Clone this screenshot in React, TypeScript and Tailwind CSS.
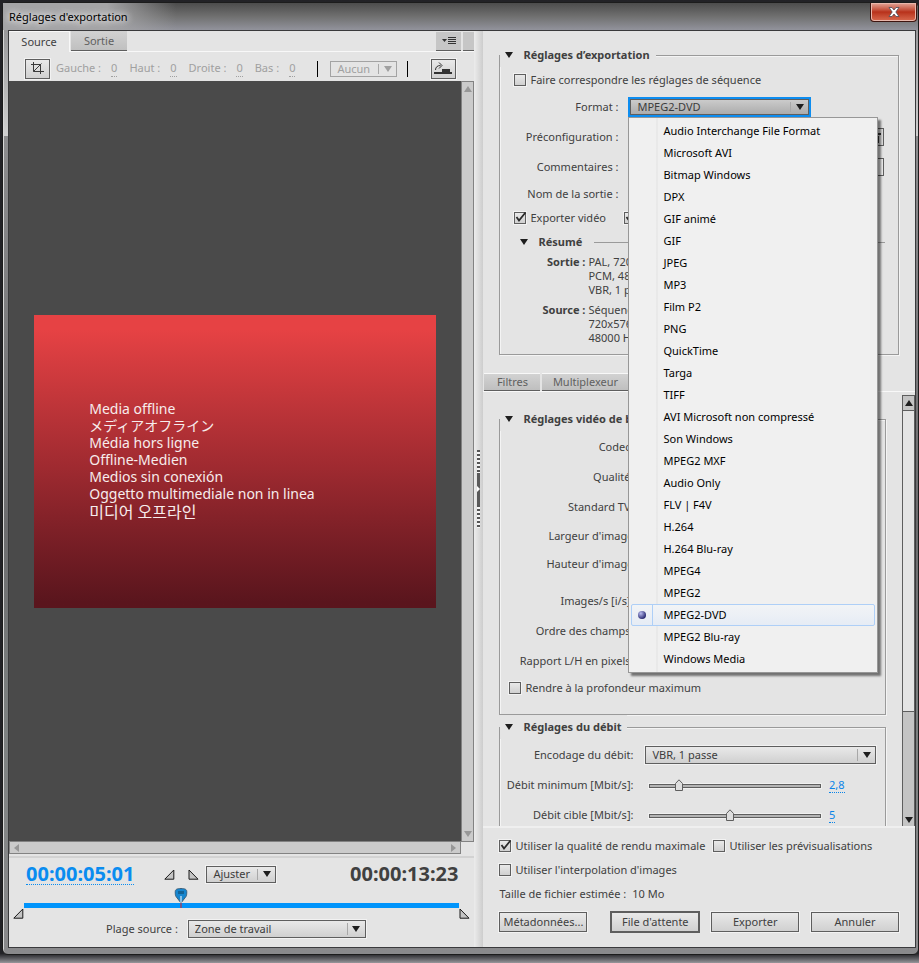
import { useState } from "react";
import type { ReactNode } from "react";
import clsx from "clsx";

const FORMATS = [
  "Audio Interchange File Format",
  "Microsoft AVI",
  "Bitmap Windows",
  "DPX",
  "GIF animé",
  "GIF",
  "JPEG",
  "MP3",
  "Film P2",
  "PNG",
  "QuickTime",
  "Targa",
  "TIFF",
  "AVI Microsoft non compressé",
  "Son Windows",
  "MPEG2 MXF",
  "Audio Only",
  "FLV | F4V",
  "H.264",
  "H.264 Blu-ray",
  "MPEG4",
  "MPEG2",
  "MPEG2-DVD",
  "MPEG2 Blu-ray",
  "Windows Media",
];

const OFFLINE_LINES = [
  { lang: "en", text: "Media offline" },
  { lang: "ja", text: "メディアオフライン" },
  { lang: "fr", text: "Média hors ligne" },
  { lang: "de", text: "Offline-Medien" },
  { lang: "es", text: "Medios sin conexión" },
  { lang: "it", text: "Oggetto multimediale non in linea" },
  { lang: "ko", text: "미디어 오프라인" },
];

const CROP_FIELDS = ["Gauche :", "Haut :", "Droite :", "Bas :"];

function Arrow({ dir = "down", className }: { dir?: "down" | "up" | "left" | "right"; className?: string }) {
  const d = {
    down: "M0 0h8L4 6z",
    up: "M0 6h8L4 0z",
    left: "M5 0v8L0 4z",
    right: "M0 0v8l5-4z",
  }[dir];
  const flat = dir === "down" || dir === "up";
  return (
    <svg
      width={flat ? 8 : 5}
      height={flat ? 6 : 8}
      viewBox={flat ? "0 0 8 6" : "0 0 5 8"}
      className={clsx("shrink-0", className)}
      aria-hidden="true"
    >
      <path d={d} fill="currentColor" />
    </svg>
  );
}

type SelectProps = {
  id?: string;
  label?: string;
  options: string[];
  value?: string;
  onChange?: (v: string) => void;
  disabled?: boolean;
  className?: string;
};

function Select({ id, label, options, value, onChange, disabled, className }: SelectProps) {
  return (
    <div
      className={clsx(
        "relative flex items-center border",
        disabled ? "border-[#a3a3a3] text-[#a0a0a0]" : "border-[#5e5e5e] text-[#3c3c3c]",
        className ?? "",
      )}
    >
      <select
        id={id}
        aria-label={label}
        disabled={disabled}
        value={value ?? options[0]}
        onChange={(e) => onChange?.(e.target.value)}
        className="h-full w-full appearance-none bg-transparent pr-5 pl-1.5 leading-[14px] outline-none"
      >
        {options.map((o) => (
          <option key={o}>{o}</option>
        ))}
      </select>
      <span className="pointer-events-none absolute inset-y-0.5 right-0 flex w-[18px] items-center justify-center border-l border-[#a8a8a8]">
        <Arrow className={disabled ? "text-[#a0a0a0]" : "text-[#1e1e1e]"} />
      </span>
    </div>
  );
}

// raised grey face shared by drop-downs and buttons
const FACE = "bg-linear-to-b from-[#e9e9e9] to-[#d0d0d0] shadow-[0_0_0_1px_#f2f2f2]";

function CheckBox({ id, label, checked = false }: { id?: string; label?: string; checked?: boolean }) {
  return (
    <span className="relative size-3 shrink-0">
      <input
        id={id}
        type="checkbox"
        aria-label={label}
        defaultChecked={checked}
        className={clsx("peer block size-3 appearance-none border border-[#5e5e5e]", FACE)}
      />
      <svg
        viewBox="0 0 14 12"
        className="pointer-events-none absolute top-0 left-0 hidden h-3 w-3.5 overflow-visible peer-checked:block"
        aria-hidden="true"
      >
        <path d="M2.500 5 5 8.500 11.500.5" fill="none" stroke="#2a2a2a" strokeWidth="1.800" />
      </svg>
    </span>
  );
}

function Check({ label, checked }: { label: string; checked?: boolean }) {
  return (
    <label className="flex items-center gap-1 whitespace-nowrap">
      <CheckBox checked={checked} />
      {label}
    </label>
  );
}

function Group({ title, className, children }: { title: string; className?: string; children: ReactNode }) {
  return (
    <fieldset
      className={clsx(
        "min-w-0 border border-[#9a9a9a] pt-px shadow-[1px_1px_0_#f4f4f4,inset_1px_1px_0_#f4f4f4]",
        className,
      )}
    >
      <legend className="flex h-6 items-center bg-[#e4e4e4] pr-1.5 pl-[5px] font-bold">
        <Arrow className="mr-2.5 text-[#1e1e1e]" />
        {title}
      </legend>
      {children}
    </fieldset>
  );
}

type RowProps = { label: string; htmlFor?: string; children?: ReactNode; className?: string };

function Row({ label, htmlFor, children, className }: RowProps) {
  return (
    <div className={clsx("flex items-center", className)}>
      <label htmlFor={htmlFor} className="w-[118px] shrink-0 text-right whitespace-nowrap">
        {label}
      </label>
      <div className="ml-2.5 flex min-w-0 flex-1 items-center gap-1 pr-3.5">{children}</div>
    </div>
  );
}

function VideoRow({ label, htmlFor, children, className = "h-[30px]" }: RowProps) {
  return (
    <div className={clsx("flex items-center", className)}>
      <label htmlFor={htmlFor} className="w-[133px] shrink-0 text-right whitespace-nowrap">
        {label}
      </label>
      <div className="ml-3 flex min-w-0 flex-1 items-center pr-[9px]">{children}</div>
    </div>
  );
}

function Slider({ id, initial, max }: { id: string; initial: number; max: number }) {
  const [value, setValue] = useState(initial);
  return (
    <>
      <div className="relative mx-1 h-4 flex-1">
        <div className="mt-[7px] h-1 border border-[#5e5e5e] bg-[#b4b4b4] shadow-[0_0_0_1px_#f0f0f0]" />
        <svg
          width="10"
          height="13"
          viewBox="0 0 10 13"
          className="absolute top-0.5 -translate-x-1/2"
          style={{ left: `${(value / max) * 100}%` }}
          aria-hidden="true"
        >
          <path d="M1.500 11.500v-7L5 .8l3.500 3.700v7z" fill="#dedede" stroke="#5e5e5e" />
        </svg>
        <input
          id={id}
          type="range"
          min={0}
          max={max}
          step={0.1}
          value={value}
          onChange={(e) => setValue(Number(e.target.value))}
          className="absolute inset-0 w-full opacity-0"
        />
      </div>
      <span className="ml-1 w-[47px] text-[#0a84e8]">
        <span className="border-b border-dotted border-[#0a84e8]">{String(value).replace(".", ",")}</span>
      </span>
    </>
  );
}

function PushButton({ children, primary }: { children: ReactNode; primary?: boolean }) {
  return (
    <button
      type="button"
      className={clsx(
        "h-5 w-[88px] border border-[#5e5e5e] text-center leading-4",
        FACE,
        primary && "outline outline-[#5e5e5e]",
      )}
    >
      {children}
    </button>
  );
}

function TitleBar() {
  return (
    <header className="flex h-[27px] shrink-0 items-start justify-between rounded-t-md bg-linear-to-b from-[#4c4c4c] via-[#707070] to-[#92939c]">
      <h1 className="flex h-full items-center bg-linear-to-r from-[#a4a4a6] from-60% to-transparent pr-12 pl-1.5 text-black [text-shadow:0_0_6px_#fff,0_0_10px_#fff]">
        Réglages d'exportation
      </h1>
      <button
        type="button"
        aria-label="Fermer"
        className="mr-px flex h-[19px] w-[47px] items-center justify-center rounded-b border border-t-0 border-[#3d1510] bg-linear-to-b from-[#e3a598] from-0% via-[#b8311a] via-50% to-[#d8694e] shadow-[inset_0_0_0_1px_#e9b7ab]"
      >
        <svg width="12" height="10" viewBox="0 0 12 10" aria-hidden="true">
          <path
            d="M1 .5h3l2 2.500 2-2.500h3L7.800 5l3.200 4.500H8L6 7 4 9.500H1L4.200 5z"
            fill="#fff"
            stroke="#4a4a55"
            strokeWidth=".8"
          />
        </svg>
      </button>
    </header>
  );
}

function SourceTabs() {
  return (
    <div className="flex h-[21px] shrink-0 items-stretch border-b border-[#f8f8f8]">
      <div role="tablist" className="flex">
        <button
          type="button"
          role="tab"
          aria-selected="true"
          className="-mb-px w-[61px] border-t border-r border-[#f8f8f8] bg-[#e4e4e4] pb-px text-center"
        >
          Source
        </button>
        <button
          type="button"
          role="tab"
          aria-selected="false"
          className="ml-px h-5 w-14 self-start border-b border-[#5e5e5e] bg-linear-to-b from-[#d2d2d2] to-[#c0c0c0] text-[#606060]"
        >
          Sortie
        </button>
      </div>
      <div className="ml-auto flex h-5 gap-0.5 pt-px">
        <button
          type="button"
          aria-label="Menu du panneau"
          className="flex w-[25px] items-center justify-center border-b border-[#5e5e5e] bg-[#c6c6c6]"
        >
          <svg width="14" height="9" viewBox="0 0 14 9" aria-hidden="true">
            <path d="M0 2h5L2.500 5z" fill="#333" />
            <path d="M6 .5h8M6 2.500h8M6 4.500h8M6 6.500h8" stroke="#333" />
          </svg>
        </button>
        <span className="w-[11px] border-b border-[#5e5e5e] bg-[#c6c6c6]" />
      </div>
    </div>
  );
}

function CropToolbar() {
  return (
    <div className="flex h-[29px] shrink-0 items-center pt-1 pr-[18px] pl-4 text-[#a0a0a0]">
      <button
        type="button"
        aria-label="Recadrer"
        className={clsx("mr-1.5 flex h-5 w-[25px] shrink-0 items-center justify-center border border-[#5e5e5e]", FACE)}
      >
        <svg width="13" height="13" viewBox="0 0 13 13" fill="none" stroke="#3a3a3a" aria-hidden="true">
          <path d="M2.500 0v9.500H13M0 2.500h9.500V12M2.500 9.500 10.500 1.500" />
        </svg>
      </button>
      <div className="flex gap-3">
        {CROP_FIELDS.map((f) => (
          <span key={f} className="flex gap-2.5 whitespace-nowrap">
            {f}
            <span className="border-b border-dotted border-[#a0a0a0]">0</span>
          </span>
        ))}
      </div>
      <span className="ml-[22px] h-4 w-px bg-black" />
      <Select label="Proportions" options={["Aucun"]} disabled className="ml-3 h-4 w-[67px] shrink-0" />
      <span className="ml-2.5 h-4 w-px bg-black" />
      <button
        type="button"
        aria-label="Définir la sortie"
        className={clsx("ml-auto flex h-5 w-[25px] shrink-0 items-center justify-center border border-[#5e5e5e]", FACE)}
      >
        <svg width="19" height="13" viewBox="0 0 19 13" aria-hidden="true">
          <path d="M0 10h8V7h8v3h2v2H0z" fill="#333" />
          <path d="M1.500 8c0-3 2-4.500 5-4.500" fill="none" stroke="#333" />
          <path d="M5 .5 8 3.500l-3 3" fill="none" stroke="#333" />
        </svg>
      </button>
    </div>
  );
}

function Viewer() {
  return (
    <div className="flex min-h-0 flex-1">
      <div className="flex min-w-0 flex-1 flex-col">
        <div className="flex min-h-0 flex-1 items-center justify-center bg-[#4a4a4a]">
          <div className="h-[293px] w-[402px] bg-linear-to-b from-[#e64244] from-5% via-[#a22b31] via-50% to-[#5a151d] to-98% pt-[85px] pl-[55px] text-[14px] leading-[17px] text-[#f7ecec]">
            {OFFLINE_LINES.map(({ lang, text }) => (
              <p key={lang} lang={lang} className={lang === "ko" ? "mt-0.5 text-[16px]" : undefined}>
                {text}
              </p>
            ))}
          </div>
        </div>
        <div className="flex h-[13px] shrink-0 items-center justify-between border border-[#828282] bg-[#cbcbcb] px-1 text-[#979797]">
          <Arrow dir="left" />
          <Arrow dir="right" />
        </div>
      </div>
      <div className="mb-3 flex w-[13px] shrink-0 flex-col items-center justify-between border border-[#828282] bg-[#cbcbcb] py-1 text-[#979797]">
        <Arrow dir="up" />
        <Arrow dir="down" />
      </div>
    </div>
  );
}

function Mark({ side }: { side: "in" | "out" }) {
  return (
    <svg width="11" height="11" viewBox="0 0 11 11" className="shrink-0" aria-hidden="true">
      <path d={side === "in" ? "M.8 10.200h9V1z" : "M1 1v9.200h9z"} fill="#c4c4c4" stroke="#1a1a1a" />
    </svg>
  );
}

function Timeline() {
  return (
    <div className="mt-0.5 shrink-0 border-t-2 border-[#d2d2d2] pt-1">
      <div className="flex h-6 items-center pr-4 pl-[17px]">
        <span className="border-b border-dotted border-[#0a8cf0] text-[20px] leading-[20px] font-bold text-[#0a8cf0]">
          00:00:05:01
        </span>
        <span className="ml-[30px] flex gap-[13px]">
          <Mark side="in" />
          <Mark side="out" />
        </span>
        <Select label="Zoom" options={["Ajuster"]} className={clsx("ml-[7px] h-[17px] w-[70px]", FACE)} />
        <span className="ml-auto text-[20px] leading-[20px] font-bold">00:00:13:23</span>
      </div>
      <div className="mx-[15px] mt-[17px] h-[5px] bg-[#0094fb]">
        <div className="relative">
          <svg
            width="13"
            height="20"
            viewBox="0 0 13 20"
            className="absolute bottom-0 left-[36%] -mb-[5px] -translate-x-1/2"
            aria-hidden="true"
          >
            <path
              d="M6.500 15 1.500 8.500C.5 7 .5 5 .5 4 .5 1.500 2.500.5 6.500.5s6 1 6 3.500c0 1 0 3-1 4.500z"
              fill="#1686cf"
              stroke="#41617a"
            />
            <path d="M4.500 3v3M6.500 3v3M8.500 3v3" stroke="#10405f" />
            <path d="M6.500 8v7" stroke="#fff" />
            <path d="M6.500 15v5" stroke="#e02020" />
          </svg>
        </div>
      </div>
      <div className="flex justify-between px-1">
        <Mark side="in" />
        <Mark side="out" />
      </div>
      <div className="flex h-5 items-center pl-[97px]">
        <label htmlFor="plage">Plage source :</label>
        <Select id="plage" options={["Zone de travail"]} className={clsx("ml-2.5 h-[18px] w-[178px]", FACE)} />
      </div>
      <div className="h-2" />
    </div>
  );
}

function Divider() {
  const grip = "h-[23px] w-[3px] bg-[repeating-linear-gradient(to_bottom,#555_0_2px,#f6f6f6_2px_4px)]";
  return (
    <div className="flex flex-col items-center justify-center bg-linear-to-r from-[#ececec] to-[#cdcdcd]">
      <span className={grip} />
      <span className="flex h-8 w-[3px] items-center bg-[#5a5a5a]">
        <svg width="3" height="6" viewBox="0 0 3 6" aria-hidden="true">
          <path d="M0 0v6l3-3z" fill="#fff" />
        </svg>
      </span>
      <span className={grip} />
    </div>
  );
}

function FormatMenu({ value, onPick }: { value: string; onPick: (v: string) => void }) {
  return (
    <ul
      role="menu"
      className="w-[250px] border border-[#979797] bg-[#f0f0f0] bg-linear-to-r from-[#f0f0f0] from-[27px] via-[#e2e2e2] via-[28px] to-[#f0f0f0] to-[29px] p-0.5 text-black shadow-[3px_3px_2px_#00000080]"
    >
      {FORMATS.map((f) => {
        const active = f === value;
        return (
          <li key={f} role="none">
            <button
              type="button"
              role="menuitemradio"
              aria-checked={active}
              onClick={() => onPick(f)}
              className={clsx(
                "flex h-[22px] w-full items-center rounded-xs border text-left",
                active ? "border-[#aecff7] bg-linear-to-b from-[#f2f4f6] to-[#e6ecf5]" : "border-transparent",
              )}
            >
              <span
                className={clsx(
                  "mr-2.5 flex h-full w-[21px] items-center justify-center border-r",
                  active ? "border-[#aecff7]" : "border-transparent",
                )}
              >
                {active && (
                  <span className="size-2 rounded-full bg-radial-[at_35%_30%] from-[#b9bdf0] to-[#1c1c66] to-80%" />
                )}
              </span>
              {f}
            </button>
          </li>
        );
      })}
    </ul>
  );
}

function ExportSettings() {
  const [format, setFormat] = useState("MPEG2-DVD");
  return (
    <Group title="Réglages d’exportation" className="relative z-10 mx-4 mt-3 pb-[9px]">
      <div className="flex h-6 items-center pl-3.5">
        <Check label="Faire correspondre les réglages de séquence" />
      </div>
      <Row label="Format :" htmlFor="format" className="h-[30px]">
        <div className="relative w-[183px] border-2 border-[#0d8df0]">
          <Select
            id="format"
            options={FORMATS}
            value={format}
            onChange={setFormat}
            className="h-4 bg-linear-to-b from-[#cbcbcb] to-[#acacac]"
          />
          <div className="absolute top-[18px] -left-0.5 z-20">
            <FormatMenu value={format} onPick={setFormat} />
          </div>
        </div>
      </Row>
      <Row label="Préconfiguration :" className="h-[30px]">
        <button
          type="button"
          aria-label="Supprimer"
          className="ml-auto flex h-[18px] w-[25px] items-center justify-end border border-[#5e5e5e] bg-[#dcdcdc] pr-0.5"
        >
          <svg width="9" height="11" viewBox="0 0 9 11" aria-hidden="true">
            <path d="M0 1h9v2H0zM1 4h6v7H1z" fill="#333" />
          </svg>
        </button>
      </Row>
      <Row label="Commentaires :" htmlFor="comments" className="h-[30px]">
        <input id="comments" type="text" className="h-[18px] w-full border border-[#5e5e5e] bg-[#ececec]" />
      </Row>
      <Row label="Nom de la sortie :" className="h-6" />
      <div className="flex h-6 items-center gap-[18px] pl-3.5">
        <Check label="Exporter vidéo" checked />
        <CheckBox label="Exporter l'audio" checked />
      </div>
      <fieldset className="mr-[13px] ml-4 border-t border-[#9a9a9a]">
        <legend className="flex h-6 items-center pr-3 pl-1 font-bold">
          <Arrow className="mr-2.5 text-[#1e1e1e]" />
          Résumé
        </legend>
        <dl className="grid grid-cols-[69px_1fr] gap-x-[3px] gap-y-1.5 pt-px leading-[14px]">
          <dt className="text-right font-bold">Sortie :</dt>
          <dd>
            PAL, 720
            <br />
            PCM, 48
            <br />
            VBR, 1 p
          </dd>
          <dt className="text-right font-bold">Source :</dt>
          <dd>
            Séquenc
            <br />
            720x576
            <br />
            48000 H
          </dd>
        </dl>
      </fieldset>
    </Group>
  );
}

function SettingsTabs() {
  const tab =
    "h-[18px] border-t border-b border-t-[#f8f8f8] border-b-[#5e5e5e] bg-linear-to-b from-[#d2d2d2] to-[#bfbfbf] text-[#606060]";
  return (
    <div role="tablist" className="mt-[18px] flex shrink-0 gap-0.5 border-b border-[#f8f8f8] pl-px">
      <button type="button" role="tab" className={clsx(tab, "w-14")}>
        Filtres
      </button>
      <button type="button" role="tab" className={clsx(tab, "w-[86px]")}>
        Multiplexeur
      </button>
    </div>
  );
}

function VideoSettings() {
  return (
    <div className="flex min-h-0 flex-1 pt-[3px]">
      <div className="min-w-0 flex-1 overflow-hidden pr-4 pl-4">
        <Group title="Réglages vidéo de b" className="mt-3 pb-3.5">
          <VideoRow label="Codec:" />
          <VideoRow label="Qualité:" />
          <VideoRow label="Standard TV:" />
          <VideoRow label="Largeur d'image" className="h-7" />
          <VideoRow label="Hauteur d'image" className="mb-2 h-7" />
          <VideoRow label="Images/s [i/s]:" />
          <VideoRow label="Ordre des champs:" />
          <VideoRow label="Rapport L/H en pixels:" />
          <div className="flex h-6 items-center pl-[9px]">
            <Check label="Rendre à la profondeur maximum" />
          </div>
        </Group>
        <Group title="Réglages du débit" className="pb-10">
          <VideoRow label="Encodage du débit:" htmlFor="encodage">
            <Select id="encodage" options={["VBR, 1 passe"]} className={clsx("h-[18px] w-full", FACE)} />
          </VideoRow>
          <VideoRow label="Débit minimum [Mbit/s]:" htmlFor="debit-min">
            <Slider id="debit-min" initial={2.8} max={16} />
          </VideoRow>
          <VideoRow label="Débit cible [Mbit/s]:" htmlFor="debit-cible">
            <Slider id="debit-cible" initial={5} max={10.7} />
          </VideoRow>
        </Group>
      </div>
      <div className="flex w-[13px] shrink-0 flex-col border-x border-[#5e5e5e] bg-[#c4c4c4] text-[#1e1e1e]">
        <span className="flex h-[15px] shrink-0 items-center justify-center border-t border-[#5e5e5e]">
          <Arrow dir="up" />
        </span>
        <span className="h-[70%] border-y border-[#5e5e5e] bg-[#e4e4e4]" />
        <span className="mt-auto flex h-3 items-center justify-center">
          <Arrow />
        </span>
      </div>
    </div>
  );
}

function Footer() {
  return (
    <footer className="shrink-0 border-t-2 border-[#efefef] px-4 pt-1.5 pb-[15px]">
      <div className="flex h-6 items-center gap-2">
        <Check label="Utiliser la qualité de rendu maximale" checked />
        <Check label="Utiliser les prévisualisations" />
      </div>
      <div className="flex h-6 items-center">
        <Check label="Utiliser l'interpolation d'images" />
      </div>
      <p className="flex h-6 items-center gap-1.5">
        Taille de fichier estimée : <span>10 Mo</span>
      </p>
      <div className="mt-1.5 flex gap-3">
        <PushButton>Métadonnées...</PushButton>
        <span className="ml-auto" />
        <PushButton primary>File d'attente</PushButton>
        <PushButton>Exporter</PushButton>
        <PushButton>Annuler</PushButton>
      </div>
    </footer>
  );
}

export default function App() {
  return (
    <div className="flex h-screen min-h-[960px] flex-col bg-linear-to-b from-[#222226] from-99% to-[#97979b] pt-0.5 pb-2 pl-0.5 font-['Noto_Sans','Noto_Sans_CJK_JP','Noto_Sans_CJK_KR',sans-serif] text-[11px] leading-[16px] text-[#404040]">
      <div className="flex min-h-0 flex-1 flex-col rounded-md border border-[#1c1c1c] bg-[linear-gradient(to_bottom,#8a8a8c,#d0d0d0_14%,#8c8c8e_14%,#6c6c6e_55%,#7c8080_75%,#8a8a8c)] shadow-[inset_1px_1px_0_#d8d8d8]">
        <TitleBar />
        <main className="mr-0.5 mb-1.5 ml-[5px] grid min-h-0 flex-1 grid-cols-[466fr_9px_432fr] border border-[#3a3a3c] bg-[#e4e4e4]">
          <section className="flex min-h-0 min-w-0 flex-col">
            <SourceTabs />
            <CropToolbar />
            <Viewer />
            <Timeline />
          </section>
          <Divider />
          <section className="flex min-h-0 min-w-0 flex-col">
            <ExportSettings />
            <SettingsTabs />
            <VideoSettings />
            <Footer />
          </section>
        </main>
      </div>
    </div>
  );
}
